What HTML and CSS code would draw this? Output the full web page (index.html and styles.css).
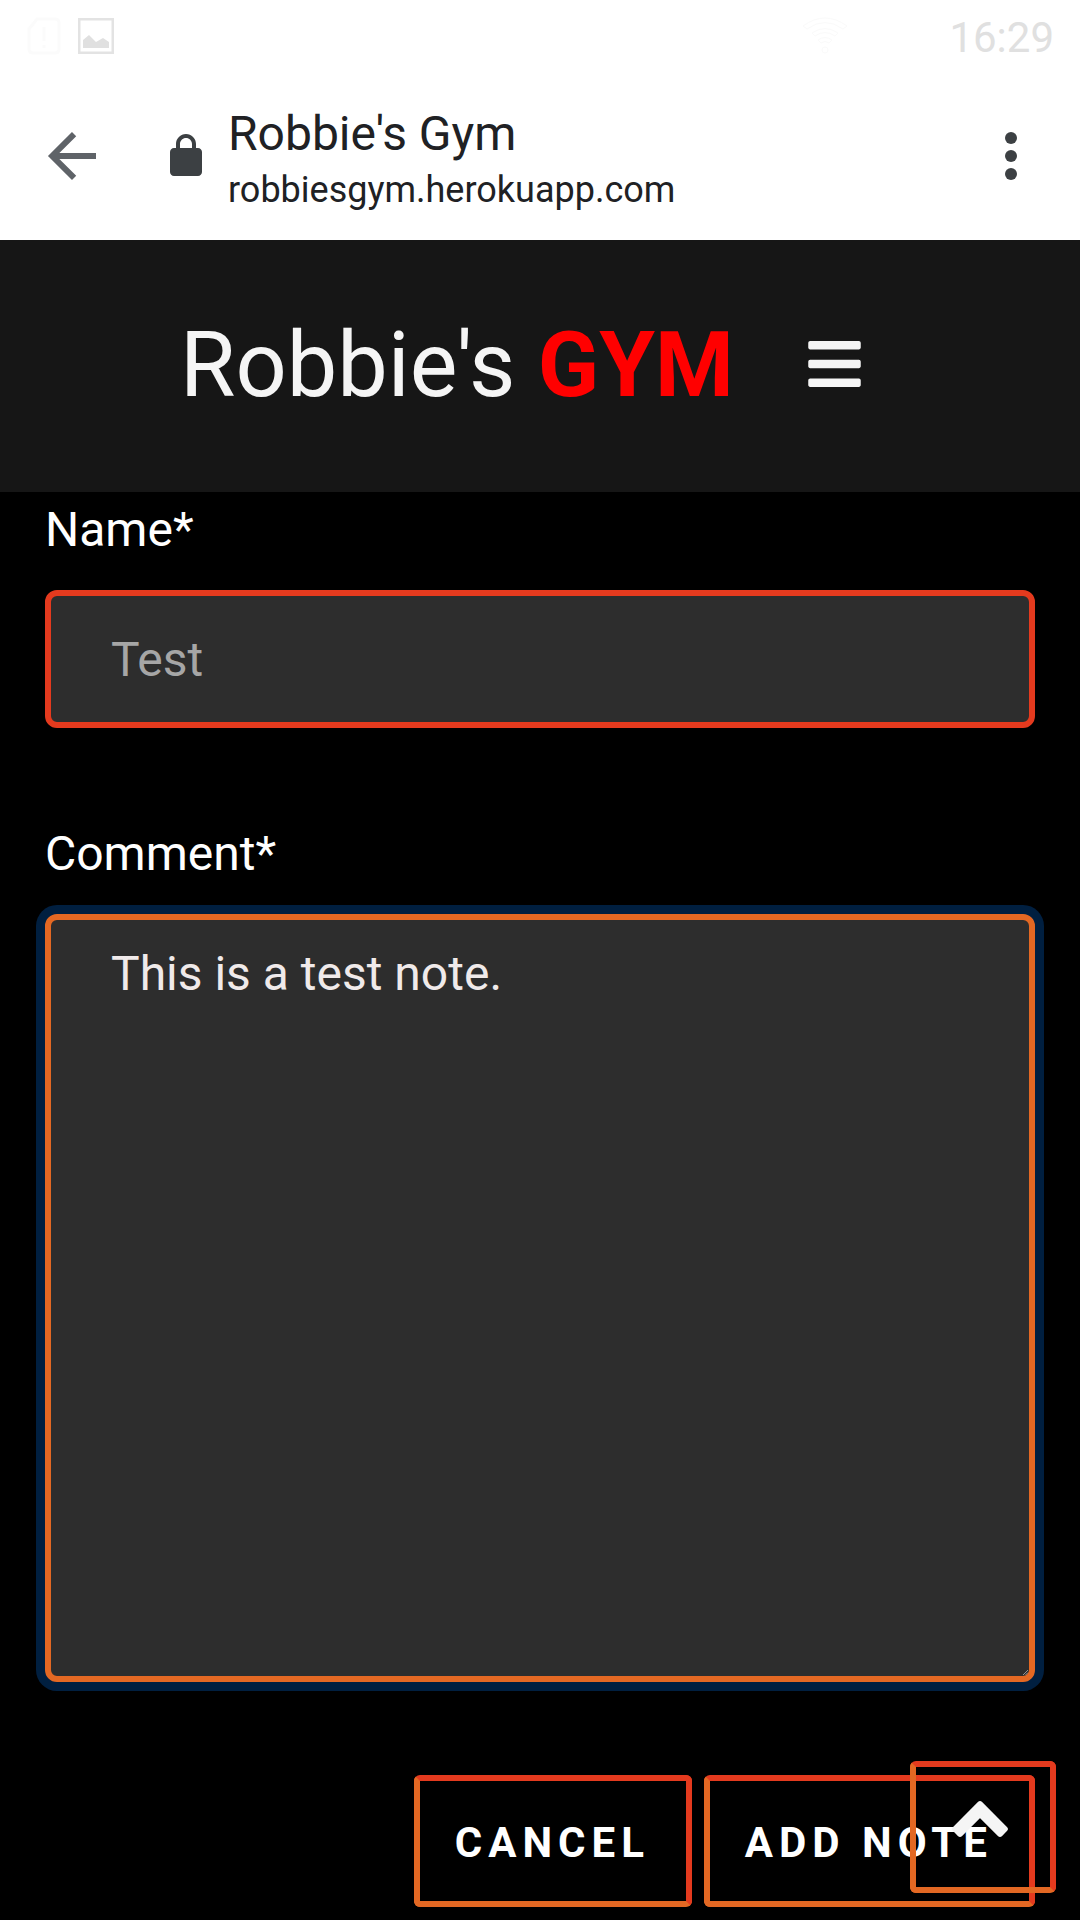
FILE: index.html
```html
<!DOCTYPE html>
<html lang="en">
<head>
<meta charset="utf-8">
<meta name="viewport" content="width=device-width, initial-scale=1">
<title>Robbie's Gym</title>
<link rel="stylesheet" href="styles.css">
</head>
<body>
<div class="status-bar">
  <svg class="status-icon sim-icon" viewBox="0 0 36 40" aria-hidden="true"><path d="M11 3h18q4 0 4 4v26q0 4-4 4H7q-4 0-4-4V13z"/><path d="M18 11v14M18 29v3"/></svg>
  <svg class="status-icon picture-icon" viewBox="0 0 36 36" aria-hidden="true"><path class="picture-frame" d="M1 1h34v34H1z"/><path class="picture-hills" d="M5 30v-8l6-5 7 7 7-4 6 4v6z"/></svg>
  <svg class="status-icon wifi-icon" viewBox="0 0 48 40" aria-hidden="true"><path d="M2 10Q24-6 46 10l-4 3Q24 0 6 13zM11 17q13-9 26 0l-3 3q-10-7-20 0zM17 24q7-5 14 0l-3 3q-4-3-8 0z"/><circle cx="24" cy="34" r="3"/></svg>
  <time class="clock">16:29</time>
</div>
<div class="browser-bar">
  <button class="bar-button" type="button" aria-label="Back"><svg class="back-icon" viewBox="0 0 24 24"><path d="M20 12H6M12.7 4.7L5.4 12l7.3 7.3"/></svg></button>
  <svg class="lock-icon" viewBox="0 0 24 24" aria-hidden="true"><path d="M18 8h-1V6c0-2.76-2.24-5-5-5S7 3.24 7 6v2H6c-1.1 0-2 .9-2 2v10c0 1.1.9 2 2 2h12c1.1 0 2-.9 2-2V10c0-1.1-.9-2-2-2zM9 6c0-1.66 1.34-3 3-3s3 1.34 3 3v2H9z"/></svg>
  <div class="page-info">
    <div class="page-title">Robbie's Gym</div>
    <div class="page-url">robbiesgym.herokuapp.com</div>
  </div>
  <button class="bar-button" type="button" aria-label="More options"><svg class="more-icon" viewBox="0 0 24 24"><circle cx="12" cy="6" r="2"/><circle cx="12" cy="12" r="2"/><circle cx="12" cy="18" r="2"/></svg></button>
</div>
<header class="site-header">
  <a class="brand" href="#">Robbie's <strong class="brand-accent">GYM</strong></a>
  <button class="menu-button" type="button" aria-label="Menu"><svg class="menu-icon" viewBox="0 0 448 512"><path d="M16 132h416c8.837 0 16-7.163 16-16V76c0-8.837-7.163-16-16-16H16C7.163 60 0 67.163 0 76v40c0 8.837 7.163 16 16 16zm0 160h416c8.837 0 16-7.163 16-16v-40c0-8.837-7.163-16-16-16H16c-8.837 0-16 7.163-16 16v40c0 8.837 7.163 16 16 16zm0 160h416c8.837 0 16-7.163 16-16v-40c0-8.837-7.163-16-16-16H16c-8.837 0-16 7.163-16 16v40c0 8.837 7.163 16 16 16z"/></svg></button>
</header>
<main>
  <form class="note-form">
    <div class="field">
      <label for="name">Name*</label>
      <input class="control" id="name" type="text" value="Test" disabled>
    </div>
    <div class="field">
      <label for="comment">Comment*</label>
      <div class="comment-box">
        <textarea class="control control-active" id="comment" rows="10">This is a test note.</textarea>
        <svg class="grip" viewBox="0 0 6 6" aria-hidden="true"><path d="M0 6l6-6M3 6l3-3"/></svg>
      </div>
    </div>
    <div class="actions">
      <button class="button" type="button">CANCEL</button>
      <button class="button" type="submit">ADD NOTE</button>
    </div>
  </form>
</main>
<a class="to-top" href="#" aria-label="Back to top"><svg class="to-top-icon" viewBox="0 0 56 37"><path d="M28 4.2L52.8 29 48 33.8l-20-20-20 20L3.2 29z"/></svg></a>
</body>
</html>
```
FILE: styles.css
```css
* {
  box-sizing: border-box;
}

body {
  margin: 0;
  background: #000;
  color: #fff;
  font: 48px/72px Roboto, sans-serif;
}

button {
  margin: 0;
  padding: 0;
  border: 0;
  background: none;
  color: inherit;
  font: inherit;
}

svg {
  display: block;
}

.status-bar {
  display: flex;
  align-items: center;
  height: 72px;
  padding: 0 26px;
  background: #fff;
}

.status-icon {
  fill: none;
  flex: none;
}

.sim-icon {
  width: 36px;
  height: 40px;
  stroke: #fbfbfb;
  stroke-width: 3;
}

.picture-icon {
  width: 36px;
  height: 36px;
  margin-left: 16px;
}

.picture-frame {
  stroke: #e3e3e3;
  stroke-width: 3;
}

.picture-hills {
  fill: #e0e0e0;
}

.wifi-icon {
  width: 48px;
  height: 40px;
  margin-left: auto;
  stroke: #fafafa;
}

.clock {
  margin-left: 100px;
  padding-top: 4px;
  color: #e0e0e0;
  font-size: 42px;
}

.browser-bar {
  display: flex;
  align-items: center;
  height: 168px;
  padding: 0 33px 0 36px;
  background: #fff;
  color: #202124;
}

.bar-button svg {
  width: 72px;
  height: 72px;
}

.back-icon {
  fill: none;
  stroke: #5f6368;
  stroke-width: 2;
}

.more-icon,
.lock-icon {
  fill: #3c4043;
}

.lock-icon {
  width: 48px;
  height: 48px;
  margin: 0 18px 0 54px;
}

.page-info {
  flex: 1;
  padding-top: 4px;
}

.page-title {
  line-height: 64px;
}

.page-url {
  font-size: 36px;
  line-height: 48px;
}

.site-header {
  display: flex;
  align-items: center;
  gap: 74px;
  height: 252px;
  padding-left: 16.6667%;
  background: #161616;
  color: #f5f5f5;
}

.brand {
  color: inherit;
  font-size: 90px;
  line-height: 108px;
  text-decoration: none;
}

.brand-accent {
  color: #f00;
  font-weight: 700;
}

.menu-button {
  padding-bottom: 4px;
}

.menu-icon {
  width: 53px;
  height: 60px;
  fill: currentColor;
}

.note-form {
  padding: 2px 45px 13px;
}

.field {
  margin-bottom: 90px;
}

.field label {
  display: block;
  margin-bottom: 24px;
}

.control {
  display: block;
  width: 100%;
  margin: 0;
  padding: 28px 60px 26px;
  border: 6px solid #e43a1e;
  border-radius: 12px;
  background: #2d2d2d;
  color: #a6a6a6;
  font: inherit;
}

.comment-box {
  position: relative;
}

.control-active {
  padding: 18px 60px;
  border-color: #e36823;
  box-shadow: 0 0 0 9px #001f40;
  color: #f0eaea;
  outline: none;
  resize: none;
}

.grip {
  position: absolute;
  right: 7px;
  bottom: 7px;
  width: 5px;
  height: 5px;
  fill: none;
  stroke: #aaa;
}

.actions {
  display: flex;
  justify-content: flex-end;
  gap: 12px;
  padding-top: 3px;
}

.button,
.to-top {
  border: 6px solid;
  border-color: #e43a1e #e43a1e #e36823 #e36823;
  border-radius: 6px;
}

.button {
  padding: 32px 36px 28px 35px;
  font-size: 42px;
  font-weight: 700;
  line-height: 60px;
  letter-spacing: 6px;
}

.to-top {
  position: fixed;
  right: 24px;
  bottom: 27px;
  width: 146px;
  height: 132px;
  padding: 33px 36px;
  color: #f5f5f5;
}

.to-top-icon {
  width: 56px;
  height: 37px;
  fill: currentColor;
  stroke: currentColor;
  stroke-width: 6;
  stroke-linejoin: round;
}
```
